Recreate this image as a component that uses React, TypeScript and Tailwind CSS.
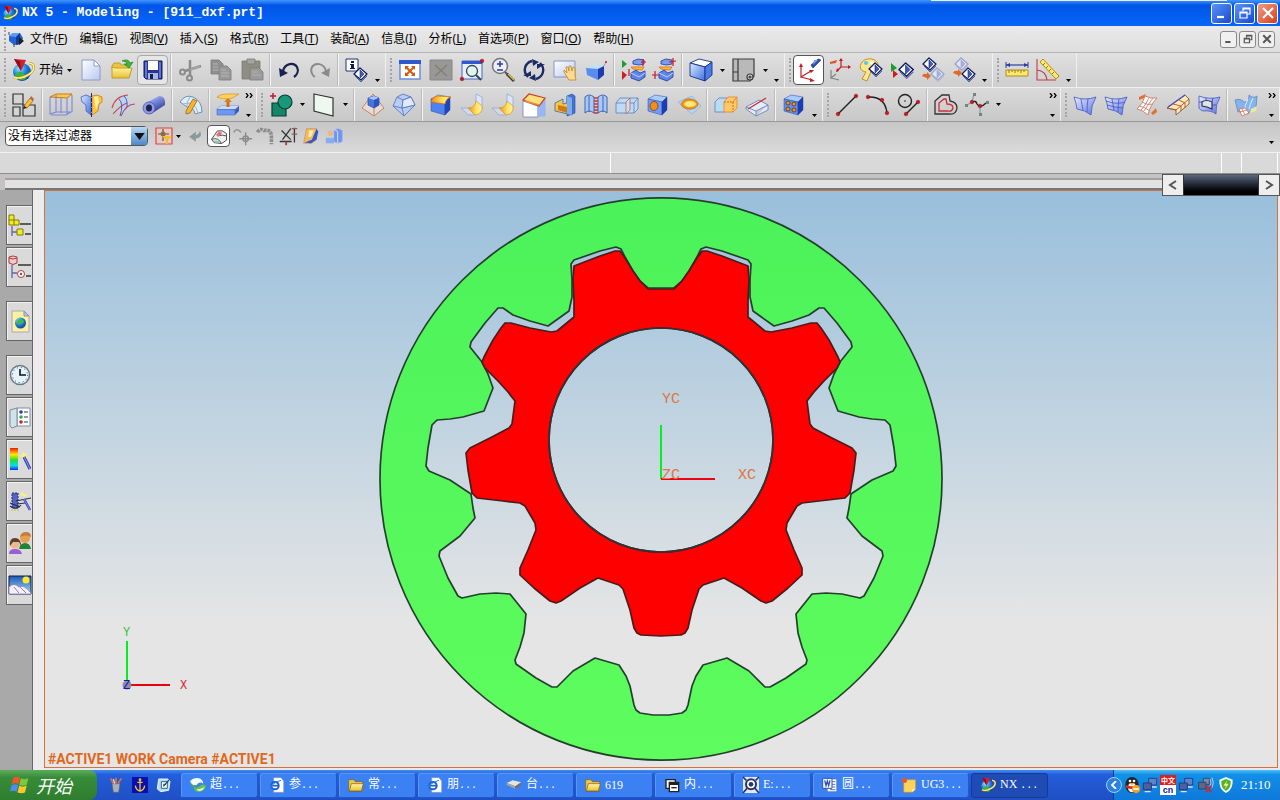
import React from "react";

type Point = [number, number];

/* ---------- shared shapes ---------- */

const Defs = () => (
  <defs>
    <linearGradient id="blue" x1="0" y1="0" x2="1" y2="1">
      <stop offset="0" stopColor="#dcebff" />
      <stop offset="1" stopColor="#3f6fe0" />
    </linearGradient>
    <linearGradient id="paleBlue" x1="0" y1="0" x2="1" y2="1">
      <stop offset="0" stopColor="#ffffff" />
      <stop offset="1" stopColor="#b9c9ee" />
    </linearGradient>
    <linearGradient id="sheet" x1="0" y1="0" x2="1" y2="1">
      <stop offset="0" stopColor="#e9edff" />
      <stop offset="1" stopColor="#5a72e2" />
    </linearGradient>
    <linearGradient id="gold" x1="0" y1="0" x2="1" y2="0">
      <stop offset="0" stopColor="#f58a1c" />
      <stop offset="0.6" stopColor="#ffe45e" />
      <stop offset="1" stopColor="#fff3a8" />
    </linearGradient>
    <linearGradient id="folder" x1="0" y1="0" x2="0" y2="1">
      <stop offset="0" stopColor="#fff7a6" />
      <stop offset="1" stopColor="#eabf34" />
    </linearGradient>
    <linearGradient id="tube" x1="0" y1="0" x2="0.5" y2="1">
      <stop offset="0" stopColor="#c9d4ff" />
      <stop offset="0.4" stopColor="#7d8ede" />
      <stop offset="1" stopColor="#2a378f" />
    </linearGradient>
    <linearGradient id="rainbow" x1="0" y1="0" x2="0" y2="1">
      <stop offset="0" stopColor="#f01800" />
      <stop offset="0.3" stopColor="#ffe800" />
      <stop offset="0.55" stopColor="#20e030" />
      <stop offset="0.8" stopColor="#10d8f0" />
      <stop offset="1" stopColor="#1028f0" />
    </linearGradient>
    <linearGradient id="sky" x1="0" y1="0" x2="0" y2="1">
      <stop offset="0" stopColor="#1c56b8" />
      <stop offset="1" stopColor="#a8e0f4" />
    </linearGradient>
    <radialGradient id="globe" cx="0.35" cy="0.3" r="0.8">
      <stop offset="0" stopColor="#9fe4ff" />
      <stop offset="0.5" stopColor="#1d7ee0" />
      <stop offset="1" stopColor="#063a94" />
    </radialGradient>
  </defs>
);

const Logo = () => (
  <>
    <circle cx="11" cy="14" r="9" fill="url(#globe)" />
    <path d="M4 17q4-6 9-1t-1 6q-6 0-8-5z" fill="#35b53a" />
    <path d="M3 1l12 1-5 11z" fill="#d81e2c" />
    <path d="M3 1l7 12-1-10z" fill="#8e0f1c" />
    <path d="M18 5c7 1 6 8-1 12-5 3-11 4-14 2" fill="none" stroke="#b58a10" strokeWidth="2.600" />
    <path d="M18 5c7 1 6 8-1 12-5 3-11 4-14 2" fill="none" stroke="#fff08a" strokeWidth="1.600" />
  </>
);

interface CubeProps {
  top: string;
  left: string;
  right: string;
}

const Cube = ({ top, left, right }: CubeProps) => (
  <g stroke="#2346a8" strokeWidth="0.5" strokeLinejoin="round">
    <path d="M2 6l7-4 12 2-5 5z" fill={top} />
    <path d="M2 6l14 3v13L2 18z" fill={left} />
    <path d="M16 9l5-5v13l-5 5z" fill={right} />
  </g>
);

const Diamond = ({ pale = false }: { pale?: boolean }) => (
  <g stroke={pale ? "#9aa3c8" : "#101c5c"} strokeWidth="1.3" strokeLinejoin="round">
    <path d="M0 6l6-6 7 6-6 6z" fill={pale ? "#e0e5f4" : "#ffffff"} />
    <path d="M6 2v8l4-4z" fill={pale ? "#a5b1dc" : "#3a5ed0"} strokeWidth="0.6" />
    <path d="M1 8l6 6 6-6" fill="none" strokeWidth="1" stroke={pale ? "#b4bddc" : "#4e66b0"} />
  </g>
);

const BlueBlocks = () => (
  <g stroke="#1c3a9c" strokeWidth="0.8" strokeLinejoin="round">
    <path d="M7 3l5-2 6 1v4l-5 1-6-1z" fill="#7c9cf0" />
    <path d="M5 15l5-3 4 3 5-2v6l-6 4-8-3z" fill="#5e84ea" />
    <path d="M5 15l8 4 6-4" fill="none" stroke="#dce6ff" />
    <path d="M5 9l13 0-2 3-9-1z" fill="#ffc22e" stroke="#e0651a" />
  </g>
);

const Dots = ({ at }: { at: Point[] }) => (
  <g fill="#d4141c" stroke="#7c0a10" strokeWidth="0.5">
    {at.map(([x, y]) => (
      <circle key={`${x}-${y}`} cx={x} cy={y} r="1.8" />
    ))}
  </g>
);

/* ---------- toolbar icons, 24 x 24 ---------- */

const icons: Record<string, React.ReactNode> = {
  logo: <Logo />,
  newFile: (
    <g stroke="#8c98cc" strokeWidth="1" fill="url(#paleBlue)">
      <path d="M3 2h12l6 6v14H3z" />
      <path d="M15 2v6h6z" fill="#fff" />
    </g>
  ),
  open: (
    <>
      <path d="M2 8l2-3h6l1 2h8v4H2z" fill="#e9c640" stroke="#c09c2c" />
      <path d="M2 20V9l3 1h17l-3 10z" fill="url(#folder)" stroke="#c09c2c" />
      <path d="M12 3c4-2 7-1 8 2l3-1-4 6-5-4h3c-1-2-2-3-5-3z" fill="#3cb83c" stroke="#157315" strokeWidth="0.6" />
    </>
  ),
  save: (
    <>
      <path d="M3 3h18v18H5l-2-2z" fill="#28368e" stroke="#141d56" />
      <path d="M7 3h10v9H7z" fill="#fff" />
      <path d="M7 15h10v6H7z" fill="#a9b6e4" />
      <path d="M9 16h3v5H9z" fill="#141d56" />
      <path d="M4 4h2v16H4zM18 4h2v16h-2z" fill="#5e74d6" />
    </>
  ),
  cut: (
    <g fill="none" stroke="#8b8b8b" strokeWidth="2">
      <circle cx="4.500" cy="14" r="2.500" />
      <circle cx="11.500" cy="20" r="2.500" />
      <path d="M7 13l16-5M12 17V2" strokeWidth="2.500" />
      <path d="M12 12l10-4" stroke="#a5a5a5" />
    </g>
  ),
  copy: (
    <g fill="#909090" stroke="#7a7a7a" strokeWidth="0.8">
      <path d="M2 2h8l4 4v10H2z" />
      <path d="M10 8h8l4 4v10H10z" fill="#999" />
      <path d="M4 6h5M4 9h6M4 12h6M12 12h5M12 15h8M12 18h8" stroke="#bdbdbd" />
    </g>
  ),
  paste: (
    <g fill="#8e8e84" stroke="#7b7b73" strokeWidth="0.8">
      <path d="M2 3h18v18H2z" />
      <path d="M7 1h8v5H7z" fill="#a5a5a0" />
      <path d="M10 10h9l4 4v8H10z" fill="#9b9b9b" />
      <path d="M12 14h6M12 17h9" stroke="#b8b8b8" />
    </g>
  ),
  undo: (
    <>
      <path d="M6 13C8 5 17 4 20 9c2 4 0 8-3 10" fill="none" stroke="#1a2050" strokeWidth="2.200" />
      <path d="M2 10l1 9 8-4z" fill="#1a2050" />
    </>
  ),
  redo: (
    <>
      <path d="M18 13C16 5 7 4 4 9c-2 4 0 8 3 10" fill="none" stroke="#8a8a8a" strokeWidth="2" />
      <path d="M22 10l-1 9-8-4z" fill="#8a8a8a" />
    </>
  ),
  info: (
    <>
      <path d="M1 1h12v12H1z" fill="#fff" stroke="#20307c" />
      <path d="M6 3h3v2H6zM5 6h4v4h1v1H5v-1h1V7H5z" fill="#10184c" />
      <g transform="translate(9 10)">
        <Diamond />
      </g>
    </>
  ),
  fit: (
    <>
      <path d="M2 3h20v18H2z" fill="#fff" stroke="#6c8ce0" strokeWidth="1.500" />
      <path d="M1 2h22v4H1z" fill="#3058cc" />
      <path d="M8 9l8 8M16 9l-8 8" stroke="#d25a14" strokeWidth="2" />
      <path d="M7 8h4l-4 4zM17 8h-4l4 4zM7 18h4l-4-4zM17 18h-4l4-4z" fill="#d25a14" />
    </>
  ),
  fitGrey: (
    <>
      <path d="M1 2h22v20H1z" fill="#989898" stroke="#878787" />
      <path d="M6 7l12 11M18 7L6 18" stroke="#857f72" strokeWidth="1.500" />
    </>
  ),
  zoomWindow: (
    <>
      <path d="M2 3h20v18H2z" fill="#e9efff" stroke="#4366c8" />
      <path d="M2 3h20v3H2z" fill="#3058cc" />
      <circle cx="12" cy="13" r="5.500" fill="#e0f4f0" stroke="#31474e" strokeWidth="1.300" />
      <path d="M16 17l5 5" stroke="#31474e" strokeWidth="2" />
      <Dots at={[[2, 21], [22, 3]]} />
    </>
  ),
  zoomInOut: (
    <>
      <circle cx="9" cy="8" r="7.500" fill="#eceefc" stroke="#77777c" strokeWidth="1.600" />
      <path d="M9 3v6M6 6h6M6 12h6" stroke="#2c3c9c" strokeWidth="1.500" />
      <path d="M14 14l3 3" stroke="#555" strokeWidth="2" />
      <path d="M16 16l7 7" stroke="#3b3b40" strokeWidth="3" />
      <path d="M17 16l6 6" stroke="#e8bc48" strokeWidth="1.300" />
    </>
  ),
  rotate: (
    <>
      <path d="M6 19C0 13 3 5 10 3M18 5c6 6 3 14-4 16" fill="none" stroke="#1c2a68" strokeWidth="2.400" />
      <path d="M10 1l7 3-6 4zM14 23l-7-3 6-4zM1 18h8v-5zM23 6h-8v5z" fill="#1c2a68" />
    </>
  ),
  pan: (
    <>
      <path d="M1 3h21v16H1z" fill="url(#paleBlue)" stroke="#8c94c0" />
      <path d="M11 12l3 3-1-6h2l1 4v-5h2l1 5 1-4 2 1v8l1 4h-7l-5-8z" fill="#ffdc8c" stroke="#b98634" strokeWidth="0.800" />
    </>
  ),
  perspective: (
    <>
      <path d="M2 10l9-3 9 1-6 3z" fill="#b9e4ff" />
      <path d="M2 10l12 1v11L3 17z" fill="#5a8cf0" />
      <path d="M14 11l6-3v9l-6 5z" fill="#1c3cae" />
      <path d="M20 8l2-4" stroke="#8c9cd0" />
      <circle cx="22" cy="4" r="1" fill="#d4141c" />
    </>
  ),
  showHide: (
    <>
      <path d="M1 2v8l5-4z" fill="#1f9c2e" />
      <path d="M1 13v9l5-5z" fill="#d31c22" />
      <g transform="translate(5 0)">
        <BlueBlocks />
      </g>
      <path d="M22 1v7M20 4h5M8 11v7" stroke="#c8142a" strokeWidth="1.200" />
    </>
  ),
  invertShown: (
    <>
      <g transform="translate(2 0)">
        <BlueBlocks />
      </g>
      <path d="M21 0v8M17 4l7-1M3 13v8M0 17h7" stroke="#c8142a" strokeWidth="1.200" />
    </>
  ),
  shaded: (
    <g stroke="#16308a" strokeWidth="0.9" strokeLinejoin="round">
      <path d="M1 5l9-4 13 3-7 5z" fill="#fff" />
      <path d="M1 5l15 4v14L1 18z" fill="url(#blue)" />
      <path d="M16 9l7-5v13l-7 6z" fill="#4c7ce8" />
    </g>
  ),
  layout: (
    <g fill="#b9b9b9" stroke="#3c3c3c" strokeWidth="1.200">
      <path d="M1 1h21v17l-4 5H1z" />
      <path d="M6 1v22M1 14h5" />
      <circle cx="18" cy="19" r="3" fill="#dedede" />
      <circle cx="18" cy="19" r="1" />
    </g>
  ),
  orient: (
    <>
      <path d="M4 7v12l10-6M4 19l11 3" fill="none" stroke="#c41a20" strokeWidth="1.200" />
      <path d="M4 5l-2 4h4zM17 12l-5 0 2 3zM18 23l-5-3v4z" fill="#c41a20" />
      <path d="M14 7l7-6 3 1-8 8z" fill="#284eb6" stroke="#14286e" strokeWidth="0.600" />
      <path d="M17 2l4 0-5 5z" fill="#7c9ce8" />
    </>
  ),
  wcs: (
    <>
      <path d="M13 1v8l-4 4M13 9h9" stroke="#c41a20" strokeWidth="1.200" fill="none" />
      <path d="M13 0l-2 3h4zM23 9l-3-2v4zM8 14l1-4 2 3z" fill="#c41a20" />
      <path d="M3 12v8l5-4M3 20l8 2" stroke="#7c8484" strokeWidth="1.200" fill="none" />
      <path d="M2 4l7-2-1 3-6 1z" fill="#e0582a" />
    </>
  ),
  palette: (
    <>
      <path d="M2 6C4 0 14-1 18 4c3 4-2 6-5 7l-5 12-5-2 4-7C2 13 0 10 2 6z" fill="#ffe58a" stroke="#b89430" />
      <circle cx="7" cy="5" r="2" fill="#52c8f0" />
      <circle cx="13" cy="5" r="1.800" fill="#fff" />
      <g transform="translate(10 5)">
        <Diamond />
      </g>
    </>
  ),
  playDiamond: (
    <>
      <path d="M1 5v9l6-4z" fill="#1f9c2e" />
      <path d="M3 12v8l5-4z" fill="#d31c22" />
      <g transform="translate(9 5) scale(1.100)">
        <Diamond />
      </g>
    </>
  ),
  toPale: (
    <>
      <g transform="translate(2 0)">
        <Diamond />
      </g>
      <g transform="translate(10 10)">
        <Diamond pale />
      </g>
      <path d="M1 18q1-3 5-2v-2l4 4-4 4v-2q-3-1-5-2z" fill="#e0682a" />
    </>
  ),
  fromPale: (
    <>
      <g transform="translate(3 0)">
        <Diamond pale />
      </g>
      <g transform="translate(10 10)">
        <Diamond />
      </g>
      <path d="M1 15q1-3 5-2v-2l4 4-4 4v-2q-3-1-5-2z" fill="#e0682a" />
    </>
  ),
  distance: (
    <>
      <path d="M1 7h22" stroke="#2a3c9c" strokeWidth="1.200" />
      <path d="M1 4v6M23 4v6" stroke="#2a3c9c" />
      <path d="M1 7l4-2v4zM23 7l-4-2v4z" fill="#2a3c9c" />
      <path d="M1 12h22v6H1z" fill="#ffe96c" stroke="#b08c1c" />
      <path d="M4 12v3M7 12v2M10 12v3M13 12v2M16 12v3M19 12v2" stroke="#7c5c10" strokeWidth="0.800" />
    </>
  ),
  angle: (
    <>
      <path d="M1 1v21h19M1 12q9 1 10 10" fill="none" stroke="#c03c44" strokeWidth="1.100" />
      <path d="M4 4l3-3 16 17-3 3z" fill="#ffe96c" stroke="#b08c1c" />
      <path d="M9 5l-2 2M12 8l-2 2M15 11l-2 2M18 14l-2 2" stroke="#7c5c10" strokeWidth="0.800" />
    </>
  ),

  sketch: (
    <>
      <path d="M1 1h10v10H1zM1 14h7v9H1zM11 12h12v11H11z" fill="#d4d4d4" stroke="#333" strokeWidth="1.200" />
      <path d="M12 13l6-8 3 3-6 7z" fill="#f6c22e" stroke="#8c5c10" strokeWidth="0.700" />
      <path d="M11 16l1-3 3 2z" fill="#222" />
      <path d="M18 5l1-2 3 3-1 2z" fill="#c05c5c" />
    </>
  ),
  extrude: (
    <>
      <path d="M1 4l6-3h16l-5 4z" fill="#ffc94a" stroke="#c8781c" />
      <path d="M1 4v17l6-2V2M7 19h15l-5 3H2M23 2v17M18 5v17M12 4v16" fill="none" stroke="#7c88d8" strokeWidth="1.100" />
    </>
  ),
  revolve: (
    <>
      <path d="M1 4l5-2 5 2v18l-5-4v-6l-4-3z" fill="url(#blue)" stroke="#4460c0" strokeWidth="0.800" />
      <path d="M12 3l5-1 5 2v5l-3 2-1 7-6 4z" fill="#ffc43c" stroke="#c8781c" strokeWidth="0.800" />
      <path d="M14 4l4-1 1 6-3 8z" fill="#fff2a0" />
      <path d="M11.500 0v24" stroke="#1c2a78" strokeWidth="1" strokeDasharray="4 1" />
    </>
  ),
  sweep: (
    <>
      <path d="M8 6q5-4 9-4l-1 8q6 0 8 2-6 0-12 11l-5-5Q12 9 8 6z" fill="#bcd2f4" />
      <path d="M1 15Q4 3 17 2M2 21q8-9 14-11M10 23q5-12 14-12" fill="none" stroke="#c84848" strokeWidth="1.100" />
      <path d="M8 6q5 5 1 17M13 3q4 4 3 11" fill="none" stroke="#4460c0" />
    </>
  ),
  tube: (
    <>
      <path d="M4 10L17 3q7 0 6 9L9 21z" fill="url(#tube)" />
      <ellipse cx="7" cy="15" rx="6" ry="6" fill="#8e9ce8" stroke="#4a58b0" strokeWidth="0.800" />
      <ellipse cx="7" cy="15" rx="3" ry="3.500" fill="#20204c" />
    </>
  ),
  sheetPencil: (
    <>
      <path d="M1 9Q6 1 14 4q9 4 9 15l-7 2Q15 14 8 14z" fill="#dceef8" stroke="#7090b4" />
      <path d="M4 11Q16 7 19 20M11 4q-3 4-3 9M18 7l-5 8" fill="none" stroke="#9cb4cc" />
      <path d="M7 18l7-12 4 2-7 12-4 1z" fill="#f6b42e" stroke="#8c5c10" strokeWidth="0.700" />
    </>
  ),
  hole: (
    <>
      <path d="M1 16l4-3h18l-4 4zM1 16h18v6H1z" fill="#6c98f4" stroke="#4a6cc8" strokeWidth="0.600" />
      <path d="M1 16l4-3h18l-4 3z" fill="#c8dcff" />
      <path d="M19 17l4-4v5l-4 4z" fill="#3a5cc4" />
      <path d="M1 4q3-3 10-3h12l-5 3q-2 2-8 2-5 0-9-2z" fill="#ffd35a" stroke="#d0902c" strokeWidth="0.700" />
      <path d="M12 6v8" stroke="#c8701c" strokeWidth="3" />
      <path d="M8 9l4-4 4 4z" fill="#d8801c" />
    </>
  ),
  unite: (
    <>
      <path d="M3 10h14v13H3z" fill="#14866c" stroke="#0a3c30" strokeWidth="1.200" />
      <circle cx="16" cy="9" r="7" fill="#189878" stroke="#0a3c30" strokeWidth="1.200" />
      <path d="M1 3h6M4 0v6" stroke="#c41a20" strokeWidth="1.500" />
    </>
  ),
  plane: <path d="M2 1l19 4v18L2 18z" fill="#eef8ee" stroke="#333" strokeWidth="1.200" />,
  pyramid: (
    <>
      <path d="M12 1L1 15l12 8 10-8z" fill="#e4dcd8" stroke="#c88458" />
      <path d="M13 8v15" stroke="#c88458" />
      <path d="M7 5l6-2 5 2v7l-5 3-6-3z" fill="#4674e0" stroke="#2846a0" strokeWidth="0.700" />
      <path d="M7 5l6-2 5 2-5 2z" fill="#a8c8ff" />
      <path d="M13 7l5-2v7l-5 3z" fill="#2c54c0" />
    </>
  ),
  facet: (
    <g fill="#b8cdf4" stroke="#5a78c0" strokeWidth="0.9">
      <path d="M5 4l6-3 8 3 4 8-11 11L1 13z" />
      <path d="M5 4l6 3 8-3M11 7l-1 8-9-2M10 15l13-3M10 15l2 8" fill="none" />
      <path d="M11 7l8-3 4 8-13 3z" fill="#e0eaff" />
    </g>
  ),
  edgeBlend: (
    <>
      <Cube top="#ffd45a" left="#4f82ee" right="#1f46ba" />
      <path d="M2 9q1-5 6-6l14 1q-5 1-6 7z" fill="url(#gold)" stroke="#d06c14" strokeWidth="0.700" />
    </>
  ),
  faceBlend: (
    <>
      <path d="M16 1l6 3v12l-6-4z" fill="#dce6fa" stroke="#8ca0d0" strokeWidth="0.700" />
      <path d="M1 15h8l6 7H8z" fill="#d0d8ec" stroke="#8ca0d0" strokeWidth="0.700" />
      <path d="M16 8q-1 7-8 7l7 7q8-1 7-9z" fill="url(#gold)" stroke="#d8902c" strokeWidth="0.700" />
    </>
  ),
  chamfer: (
    <>
      <path d="M1 8l15 5v11H1z" fill="#fff" stroke="#6c84d8" strokeWidth="0.800" />
      <path d="M16 13l7-7v17h-7z" fill="#98b8f4" stroke="#8cb0f0" strokeWidth="0.800" />
      <path d="M1 7l6-6 16 4-6 8z" fill="#ffe07c" stroke="#c83c24" strokeWidth="1.200" />
      <path d="M3 8l14 4" stroke="#f08c2c" strokeWidth="1.500" />
    </>
  ),
  shell: (
    <>
      <path d="M14 3l5-2 3 2v17l-8 3z" fill="#4474dc" stroke="#2346a8" strokeWidth="0.600" />
      <path d="M2 10l8-4v5l4-1V3l5 2v17L2 18z" fill="#ffc23c" stroke="#2a6cb4" strokeWidth="0.800" />
      <path d="M5 12l9 2v6l-9-3z" fill="#c87c1c" />
      <path d="M14 3l5 2v17l-5-1z" fill="#7cacf0" />
    </>
  ),
  thread: (
    <>
      <path d="M1 4q4-4 9 0v16q-5-4-9 0zM14 4q5-4 9 0v16q-4-4-9 0z" fill="#a9c8f4" stroke="#3c64b4" />
      <path d="M5 3v16M19 3v16" stroke="#3c64b4" />
      <path d="M10 5h4M10 8h4M10 11h4M10 14h4M10 17h4M10 20h4" stroke="#c83434" strokeWidth="1.300" />
    </>
  ),
  trimBody: (
    <>
      <path d="M1 10l4-5h18v11l-4 4H1z" fill="#c0daf4" stroke="#5c80bc" strokeWidth="0.800" />
      <path d="M1 10h18l4-5M19 10v10" fill="none" stroke="#5c80bc" strokeWidth="0.800" />
      <path d="M11 21V9l4-4v12z" fill="#dcdce0" stroke="#a46c6c" strokeWidth="0.800" />
    </>
  ),
  pocket: (
    <>
      <Cube top="#a8ccff" left="#6f9cf6" right="#1f3cae" />
      <ellipse cx="8" cy="13" rx="4" ry="4.500" fill="#f0901c" stroke="#7c3c10" strokeWidth="0.800" />
    </>
  ),
  emboss: (
    <>
      <path d="M1 9l14-6 9 10-9 8z" fill="#b4d4f8" stroke="#8cb0dc" strokeWidth="0.700" />
      <path d="M4 11q3-6 10-5 8 2 7 6-3 5-10 4-6-1-7-5z" fill="#f4941c" stroke="#c06c14" strokeWidth="0.700" />
      <ellipse cx="13" cy="11" rx="6" ry="3" fill="#ffe878" />
    </>
  ),
  patch: (
    <>
      <path d="M1 9l4-4h9v5l-3 9H1z" fill="#b9dcf2" stroke="#5c80bc" strokeWidth="0.800" />
      <path d="M10 9l4-5h9v11l-4 4h-9z" fill="#ffc868" stroke="#e0882c" strokeWidth="0.800" />
      <path d="M10 9h9l4-5M19 9v10" fill="none" stroke="#d4681c" strokeDasharray="2 1" />
    </>
  ),
  divideFace: (
    <>
      <path d="M1 14l13-7 9 5-12 6zM1 14v2l10 7v-5M11 23l12-6v-5" fill="#e4ecfa" stroke="#5c78b4" strokeWidth="0.800" />
      <path d="M3 16L21 5" stroke="#c8302c" strokeWidth="1.300" />
    </>
  ),
  pattern: (
    <>
      <Cube top="#a8ccff" left="#5f8ef2" right="#1f3cae" />
      <g fill="#f4921c" stroke="#5c3410" strokeWidth="0.800">
        <circle cx="6" cy="10" r="2" />
        <circle cx="12" cy="11" r="2" />
        <circle cx="6" cy="16" r="2" />
        <circle cx="12" cy="17" r="2" />
      </g>
    </>
  ),
  line: (
    <>
      <path d="M3 21L21 3" stroke="#222" strokeWidth="1.400" />
      <Dots at={[[3, 21], [21, 3]]} />
    </>
  ),
  arc: (
    <>
      <path d="M2 4q17-1 19 16" fill="none" stroke="#222" strokeWidth="1.400" />
      <Dots at={[[2, 4], [16, 7], [21, 20]]} />
    </>
  ),
  circleLine: (
    <>
      <circle cx="8" cy="8" r="6.500" fill="none" stroke="#222" strokeWidth="1.400" />
      <circle cx="8" cy="8" r="0.800" fill="#222" />
      <path d="M9 21L21 9" stroke="#222" strokeWidth="1.400" />
      <Dots at={[[9, 21], [21, 9]]} />
    </>
  ),
  offset: (
    <g fill="none" strokeWidth="1.300">
      <path d="M1 21V8l7-6h7l1 6q7 1 7 7-1 7-8 6z" stroke="#333" />
      <path d="M5 18v-8l5-4h2l1 5q6 0 6 4-1 4-5 3z" stroke="#c8303c" />
    </g>
  ),
  spline: (
    <>
      <path d="M7 9q4-2 5 2 3 5 9-1" fill="none" stroke="#222" strokeWidth="1.400" />
      <path d="M7 9l2-8M7 9l-5 3M15 13v9" stroke="#8c9c9c" strokeWidth="1.200" />
      <g fill="#748484">
        <path d="M8 0h3v3H8zM0 11h3v3H0zM14 20h3v3h-3zM21 8h3v3h-3z" />
      </g>
      <Dots at={[[7, 9], [15, 13]]} />
    </>
  ),
  ruled: (
    <g stroke="#4454c0" strokeWidth="0.800">
      <path d="M1 4q11 4 22 0-5 8-5 18-6-5-14-6-1-7-3-12z" fill="url(#sheet)" />
      <path d="M8 6q1 6 2 11M15 6q-1 6-1 13" fill="none" />
    </g>
  ),
  mesh: (
    <g stroke="#4454c0" strokeWidth="0.800">
      <path d="M1 4q11 4 22 0-5 8-5 18-6-5-14-6-1-7-3-12z" fill="url(#sheet)" />
      <path d="M8 6q1 6 2 11M15 6q-1 6-1 13M2 8q11 4 19 1M3 12q10 3 16 3" fill="none" />
    </g>
  ),
  swept: (
    <>
      <path d="M10 3q6 3 12 2-7 6-9 17-5-5-11-6Q8 11 10 3z" fill="#fff" />
      <path d="M10 3q6 3 12 2M7 9q6 4 11 2M4 13q6 1 11 5M2 16q6 1 11 6M10 3Q8 11 2 16M14 5q-4 8-8 12M18 5q-5 7-9 13M22 5q-7 7-9 17" fill="none" stroke="#d07c6c" strokeWidth="0.900" />
      <path d="M4 4l7-3-2 4-5 2zM16 20l5-5 1 4-4 3z" fill="#e0702c" />
    </>
  ),
  section: (
    <>
      <path d="M1 15L19 2l4 4v5L10 22v-5z" fill="#ffe9b0" stroke="#7c5c3c" strokeWidth="0.900" />
      <path d="M1 15l9 2L23 6M7 11l8 2v5M13 7l6 3v5" fill="none" stroke="#b04c3c" strokeWidth="0.900" />
      <path d="M2 14L19 2" stroke="#4454c0" strokeWidth="1.300" />
    </>
  ),
  nSided: (
    <>
      <path d="M2 3q10 4 21 1-5 8-4 17-5-4-13-3Q3 17 2 15z" fill="url(#sheet)" stroke="#4454c0" strokeWidth="0.800" />
      <path d="M5 13V9q4-3 10 0v7l-5-2z" fill="#e0e4e8" stroke="#28344c" strokeWidth="1.200" />
      <path d="M9 5v3M16 5l-1 4M2 9h3M15 12h4" stroke="#4454c0" />
    </>
  ),
  studio: (
    <>
      <path d="M1 7q6-2 9 2 5 1 5-7 4 4 8 1l-1 12q-5 1-8 6-4-4-10-2z" fill="#84b4f0" stroke="#4c74b0" strokeWidth="0.600" />
      <path d="M14 6q-4 7-3 12M19 5q-3 7-4 11" fill="none" stroke="#dceaff" />
      <path d="M5 16l6-1 4 5-7 3z" fill="#fff" stroke="#d45c3c" strokeWidth="0.700" />
      <path d="M8 16l3 6M6 19l7-2" stroke="#d45c3c" strokeWidth="0.700" />
      <path d="M17 16l6-3-1 5-6 2z" fill="#ece8a4" />
    </>
  ),

  /* selection bar */
  snap: (
    <>
      <path d="M4 4h16v16H4z" fill="#e4ccc4" stroke="#d4484c" strokeWidth="1.200" />
      <path d="M11 5v12M6 10h11" stroke="#6c4a34" strokeWidth="1.200" />
      <circle cx="11" cy="10" r="2.500" fill="#8c6c44" />
      <path d="M10 12h10l-4 4v4h-2v-4z" fill="#f4bc28" />
    </>
  ),
  back: <path d="M18 6q4 8-5 9v4l-8-6 8-6v4q4-1 5-5z" fill="#8a9a9a" />,
  eraser: (
    <g stroke="#444" strokeWidth="1.100" strokeLinejoin="round">
      <path d="M3 16l7-10q6-2 11 3l0 8-6 4-9-1z" fill="#f0f0f0" />
      <path d="M3 16q8-3 12 5M10 12q7-2 11 0" fill="none" />
      <path d="M8 11l4-4 4 1-3 4z" fill="#e06c78" stroke="none" />
      <path d="M5 17l7 1 1 2H7z" fill="#8cc8b8" stroke="none" />
    </g>
  ),
  point: (
    <g fill="none" stroke="#8c8c8c" strokeWidth="1.500">
      <path d="M3 8q3-6 8 0M16 8v14M9 15h14" />
      <circle cx="16" cy="15" r="3" />
    </g>
  ),
  chain: (
    <path d="M4 8q2-5 7-2 8-2 8 7v8" fill="none" stroke="#8c8c8c" strokeWidth="4" strokeDasharray="3 1" />
  ),
  filterLine: (
    <g fill="none" stroke="#333" strokeWidth="1.400">
      <path d="M5 6l10 10M15 4L6 16M19 3v16M3 18h13" />
      <path d="M16 4h6M16 10h6" stroke="#8c5c54" />
      <path d="M10 18v4" stroke="#b03c34" strokeWidth="2" />
    </g>
  ),
  faceSel: (
    <>
      <path d="M7 4h11v11l-5 5H4z" fill="#f4b860" stroke="#c88c5c" strokeWidth="0.700" />
      <path d="M18 4l2 3-2 9-6 4-7-1 8-3z" fill="#3458c8" />
      <path d="M10 6h5l-3 7H9z" fill="#fff0a8" />
    </>
  ),
  bodySel: (
    <>
      <path d="M12 5l5-1 4 2v12l-5 2-4-2z" fill="#6f94f0" stroke="#9cb0ec" strokeWidth="0.700" />
      <path d="M12 5l4 2v13" fill="none" stroke="#dce6ff" />
      <circle cx="8" cy="9" r="3" fill="#e8b888" />
      <path d="M3 14h9v6H3z" fill="#8cacf0" />
    </>
  ),

  /* resource bar */
  assemblyNav: (
    <>
      <path d="M1 2h5v5h5v5H1z" fill="#f4ec1c" stroke="#7c7c10" />
      <path d="M1 7h5v5" fill="none" stroke="#7c7c10" />
      <path d="M12 11h11M17 21h6" stroke="#333" strokeWidth="1.500" />
      <path d="M4 13v10M4 19h5" stroke="#6464a8" strokeWidth="1.300" />
      <path d="M9 16h6v6H9z" fill="#f4ec1c" stroke="#7c7c10" />
    </>
  ),
  partNav: (
    <>
      <path d="M1 2q4-2 8 0v6q-4 3-8 0z" fill="#f0c8c8" stroke="#a83c3c" />
      <path d="M1 3q4 2 8 0" fill="none" stroke="#a83c3c" />
      <path d="M10 10h13M18 21h5" stroke="#333" strokeWidth="1.500" />
      <path d="M4 10v13M4 18h5" stroke="#6464a8" strokeWidth="1.300" />
      <circle cx="13" cy="19" r="3.500" fill="#fff" stroke="#a83c3c" />
      <circle cx="13" cy="19" r="1.200" fill="#a83c3c" />
    </>
  ),
  webPage: (
    <>
      <path d="M4 2h12l5 5v16H4z" fill="#fff0a0" stroke="#a8a8b8" />
      <path d="M16 2v5h5z" fill="#b4c8f0" stroke="#8c8cb0" />
      <circle cx="12.500" cy="14" r="5.500" fill="url(#globe)" />
      <path d="M9 12q3-4 6-1t-3 4q-4 1-3-3z" fill="#44b44c" />
    </>
  ),
  clock: (
    <>
      <circle cx="12" cy="12" r="9.500" fill="#e4f4fc" stroke="#6c7c84" strokeWidth="1.500" />
      <circle cx="12" cy="12" r="7.500" fill="none" stroke="#34444c" strokeDasharray="1 3" />
      <path d="M12 6v6h6" fill="none" stroke="#111" strokeWidth="1.600" />
    </>
  ),
  roles: (
    <>
      <path d="M9 3h13v18H9z" fill="#fff" stroke="#7c8ca0" />
      <path d="M2 5l7-2v18l-5 2-2-2z" fill="#d0e4e8" stroke="#7c8ca0" />
      <circle cx="13" cy="7" r="1.800" fill="#2c3cb0" />
      <circle cx="13" cy="12" r="1.800" fill="#2cb04c" />
      <circle cx="13" cy="17" r="1.800" fill="#d01c3c" />
      <path d="M16 7h4M16 12h4M16 17h4" stroke="#333" />
    </>
  ),
  spectrum: (
    <>
      <path d="M2 1h8v22H2z" fill="url(#rainbow)" />
      <path d="M15 4l2 3 3-1-2 3 3 3-4-1-2 3-1-4-3-1 3-2z" fill="#f4f08c" />
      <path d="M16 10l6 12" stroke="#3840b8" strokeWidth="3" />
      <path d="M16 10l6 12" stroke="#a8b0f4" strokeWidth="0.800" />
    </>
  ),
  process: (
    <>
      <path d="M4 4h6v15H4z" fill="#5864c0" stroke="#202c70" strokeDasharray="2 1" />
      <path d="M2 17q6 5 11-1M8 12l15-3M9 15l8-1M2 14l10 4" stroke="#28304c" strokeWidth="1.100" fill="none" />
      <path d="M3 21h9" stroke="#c8c040" strokeDasharray="2 1" />
      <path d="M14 2l2 3 4 0-3 3-5-2z" fill="#f4f08c" />
      <path d="M16 10l6 11" stroke="#3840b8" strokeWidth="2.500" />
      <path d="M16 10l6 11" stroke="#a8b0f4" strokeWidth="0.700" />
    </>
  ),
  people: (
    <>
      <circle cx="17" cy="7" r="5" fill="#e8a04c" />
      <path d="M12 6q1-5 6-5t5 5q-5-3-11 0z" fill="#c87c3c" />
      <path d="M11 18q1-6 6-6t6 6z" fill="#1f8434" />
      <circle cx="7" cy="13" r="4.500" fill="#f0b888" />
      <path d="M2 15q-1-8 5-8t6 8l-2-4H5z" fill="#5c4034" />
      <path d="M1 23q0-5 6-5t7 5z" fill="#9c5cd8" />
    </>
  ),
  scene: (
    <>
      <path d="M1 3h22v18H1z" fill="url(#sky)" stroke="#102048" />
      <circle cx="18" cy="7" r="3.500" fill="#ffe830" />
      <path d="M1 21v-7q5-5 10 0 5-3 12 6v1z" fill="#f4f0fc" stroke="#8c7cac" strokeWidth="0.800" />
      <path d="M6 14l5 6M12 14l6 6" stroke="#8c7cac" />
    </>
  ),

  /* taskbar */
  flag: (
    <>
      <path d="M4 3q4-2 8 0l-2 8q-4-2-8 0z" fill="#f0582c" />
      <path d="M13 4q4 2 9 0l-2 8q-4 2-9 0z" fill="#7cc83c" />
      <path d="M2 12q4-2 8 0l-2 8q-4-2-8 0z" fill="#4c8cf4" />
      <path d="M11 13q4 2 9 0l-2 8q-4 2-9 0z" fill="#fcc82c" />
    </>
  ),
  tools: (
    <>
      <path d="M6 10h12l-2 13H8z" fill="#a8b0b8" stroke="#5c646c" />
      <path d="M8 10L4 2M12 10V1M15 10l5-8" stroke="#d8743c" strokeWidth="2.500" />
      <path d="M10 10L8 3" stroke="#dcdce8" strokeWidth="2" />
    </>
  ),
  anchor: (
    <>
      <path d="M0 0h24v24H0z" fill="#0810b0" />
      <path d="M12 4v17M5 13q1 7 7 8 6-1 7-8M8 8h8" fill="none" stroke="#f4c02c" strokeWidth="2" />
      <circle cx="12" cy="4" r="2" fill="#f4c02c" />
    </>
  ),
  desktop: (
    <>
      <path d="M4 3h14l3 3-2 14-12 2-5-4z" fill="#b8dcf4" stroke="#e8f4ff" strokeWidth="1.500" />
      <path d="M8 7h9v10H8z" fill="#fff" stroke="#306090" strokeWidth="1.500" />
      <path d="M11 14l9-10M11 11h4" stroke="#1c446c" strokeWidth="2" />
    </>
  ),
  greenBird: (
    <>
      <path d="M0 6q6-6 13-4 6 1 7 8-6-4-10 2-7 2-10-6z" fill="#f4fff0" />
      <path d="M0 6q1 8 10 6l-3 3Q1 15 0 6z" fill="#4cb430" />
      <path d="M24 14q-3 9-12 8-6 0-6-7 5 3 9-2 7-4 9 1z" fill="#60c838" />
      <path d="M10 18q6 1 12-3-3 6-8 6-3 0-4-3z" fill="#e8ffd8" />
    </>
  ),
  ie: (
    <>
      <path d="M7 1h11l4 5v17H7z" fill="#fff" stroke="#8c98b0" />
      <circle cx="9" cy="13" r="5.500" fill="#fff" stroke="#1c60d0" strokeWidth="3" />
      <path d="M4 13h11" stroke="#1c60d0" strokeWidth="2.500" />
      <path d="M1 21Q2 9 18 5" fill="none" stroke="#2c80e8" strokeWidth="1.500" />
    </>
  ),
  folder: (
    <>
      <path d="M1 4h8l2 3h11v14H1z" fill="#ecc850" stroke="#7c5c14" />
      <path d="M2 21L5 10h18l-3 11z" fill="url(#folder)" stroke="#7c5c14" />
    </>
  ),
  drive: (
    <>
      <path d="M1 9l9-4 13 3-9 6z" fill="#e4e4e0" />
      <path d="M1 9l13 5v4L1 12z" fill="#a4a49c" />
      <path d="M14 14l9-6v4l-9 6z" fill="#707068" />
    </>
  ),
  dataWindow: (
    <>
      <path d="M3 4h14v13H3z" fill="#fff" stroke="#222" strokeWidth="2" />
      <path d="M8 8h14v14H8z" fill="#fff" stroke="#222" strokeWidth="2" />
      <path d="M8 8h14v4H8z" fill="#222" />
      <path d="M11 16h8" stroke="#222" strokeWidth="2" />
    </>
  ),
  lens: (
    <>
      <path d="M0 0h24v24H0z" fill="#e4e8f4" />
      <circle cx="12" cy="11" r="7.500" fill="#fff" stroke="#28346c" strokeWidth="3" />
      <circle cx="12" cy="11" r="3.500" fill="#28346c" />
      <path d="M17 16l7 8M0 24l6-7M0 0l5 5M24 0l-5 5" stroke="#28346c" strokeWidth="2.500" />
    </>
  ),
  word: (
    <>
      <path d="M8 3h14v19H8z" fill="#fff" stroke="#5c74ac" />
      <path d="M12 7h8M15 11h5M15 15h5M12 19h8" stroke="#5c74ac" strokeWidth="1.500" />
      <path d="M1 2h14v15H1z" fill="#f4f8ff" stroke="#3054b4" strokeWidth="1.500" />
      <path d="M4 5l2 8 2-7 2 7 2-8" fill="none" stroke="#2448b0" strokeWidth="1.800" />
    </>
  ),
  note: (
    <>
      <path d="M4 4h18v14l-5 5H4z" fill="#fcd45c" stroke="#c08c28" />
      <path d="M17 23v-5h5z" fill="#fff0b4" />
      <circle cx="5" cy="5" r="4" fill="#e0583c" />
    </>
  ),
  penguin: (
    <>
      <ellipse cx="12" cy="12" rx="10" ry="12" fill="#20242c" />
      <ellipse cx="12" cy="16" rx="6" ry="7" fill="#fff" />
      <circle cx="9" cy="6" r="2" fill="#fff" />
      <circle cx="15" cy="6" r="2" fill="#fff" />
      <path d="M7 9h10l-5 3z" fill="#f4a81c" />
      <path d="M3 12q9 4 18 0v4q-9 4-18 0z" fill="#e0281c" />
      <circle cx="18" cy="18" r="6" fill="#f4a020" />
      <path d="M14 18h8" stroke="#fff" strokeWidth="2.500" />
    </>
  ),
  network: (
    <g stroke="#203070" strokeWidth="1.200">
      <path d="M10 2h12v10H10z" fill="#5c84c8" />
      <path d="M2 9h12v10H2z" fill="#4c60a0" />
      <path d="M4 22h9M15 15h7" stroke="#dce0ec" strokeWidth="2" />
    </g>
  ),
  networkOff: (
    <g stroke="#303850" strokeWidth="1.200">
      <path d="M8 2h9v9H8z" fill="#7c8cac" />
      <path d="M1 8h11v10H1z" fill="#5c6888" />
      <path d="M18 3q3 5 0 11M21 1q4 8 0 15" fill="none" stroke="#dce0ec" />
      <path d="M12 13l8 10M20 13l-8 10" stroke="#e02020" strokeWidth="2.500" />
    </g>
  ),
  shield: (
    <>
      <path d="M12 0l10 4q1 14-10 20Q1 18 2 4z" fill="#f4fff0" />
      <path d="M12 3l7 3q1 10-7 15Q4 16 5 6z" fill="#50b030" />
      <path d="M14 5l-6 8h4l-2 6 6-9h-4z" fill="#fff27c" />
    </>
  ),
};

interface IconProps {
  name: string;
  className?: string;
}

const Icon: React.FC<IconProps> = ({ name, className = "h-6 w-6" }) => (
  <svg viewBox="0 0 24 24" className={`${className} shrink-0 overflow-visible`} aria-hidden="true">
    {icons[name]}
  </svg>
);

/* ---------- toolbars ---------- */

const Grip = () => (
  <span className="ml-1 mr-px h-6 w-[3px] shrink-0 border-l-2 border-dotted border-[#a4a4a4]" />
);

const Separator = () => (
  <span className="mx-[2px] h-8 w-[2px] shrink-0 border-l border-r border-l-[#bcbcbc] border-r-[#f4f4f4]" />
);

const Caret = ({ className = "h-7 w-3" }: { className?: string }) => (
  <button aria-label="More" className={`flex shrink-0 items-center justify-center ${className}`}>
    <svg viewBox="0 0 5 3" className="h-[3px] w-[5px]">
      <path d="M0 0h5L2.500 3z" fill="#000" />
    </svg>
  </button>
);

const Overflow = ({ chevron = false }: { chevron?: boolean }) => (
  <button aria-label="Toolbar options" className="flex h-8 w-[11px] shrink-0 flex-col items-center justify-between pb-1 pt-1">
    <svg viewBox="0 0 8 5" className="h-[5px] w-2">
      {chevron && <path d="M1 0l2 2.500L1 5M5 0l2 2.500L5 5" fill="none" stroke="#000" strokeWidth="1.300" />}
    </svg>
    <svg viewBox="0 0 5 3" className="h-[3px] w-[5px]">
      <path d="M0 0h5L2.500 3z" fill="#000" />
    </svg>
  </button>
);

/* "|" is a separator, "v" a drop-down arrow, a leading "*" a pressed button */
const Tools = ({ items }: { items: string }) => (
  <>
    {items.split(" ").map((item, i) => {
      if (item === "|") return <Separator key={i} />;
      if (item === "v") return <Caret key={i} />;
      const name = item.replace("*", "");
      return (
        <button
          key={i}
          aria-label={name}
          className={`flex h-[30px] w-[31px] shrink-0 items-center justify-center rounded-sm ${
            item.startsWith("*")
              ? name === "save"
                ? "border border-[#a8a8a8] bg-[#e6e6e6]"
                : "border border-[#555] bg-white"
              : ""
          }`}
        >
          <Icon name={name} />
        </button>
      );
    })}
  </>
);

const Group = ({ children, className = "" }: { children: React.ReactNode; className?: string }) => (
  <div className={`flex items-center border-r border-r-[#f0f0f0] pr-[2px] ${className}`}>
    <Grip />
    {children}
  </div>
);

/* ---------- title and menu ---------- */

const menus: [string, string][] = [
  ["文件", "F"],
  ["编辑", "E"],
  ["视图", "V"],
  ["插入", "S"],
  ["格式", "R"],
  ["工具", "T"],
  ["装配", "A"],
  ["信息", "I"],
  ["分析", "L"],
  ["首选项", "P"],
  ["窗口", "O"],
  ["帮助", "H"],
];

const windowGlyphs: [string, string][] = [
  ["Minimize", "M3 12h7"],
  ["Restore", "M6 6V3h7v6h-3M3 7h7v6H3zM3 8h7M6 4h7"],
  ["Close", "M3 3l10 10M13 3L3 13"],
];

const TitleBar = () => (
  <header className="relative flex h-[26px] items-center bg-linear-to-b from-[#3f96ff] via-[#0055e5] via-20% to-[#0566fb] pl-[2px] pr-[2px]">
    <span className="absolute right-[53px] top-0 h-px w-[296px] bg-[#e6ecf4]" />
    <Icon name="logo" className="h-4 w-4" />
    <h1 className="ml-1 flex-1 whitespace-nowrap font-['Liberation_Mono','Noto_Sans_CJK_SC',monospace] text-[13px] font-bold leading-5 text-white">
      NX 5 - Modeling - [911_dxf.prt]
    </h1>
    <div className="flex gap-[2px]">
      {windowGlyphs.map(([label, d]) => (
        <button
          key={label}
          aria-label={label}
          className={`flex h-[21px] w-[21px] items-center justify-center rounded-[3px] border border-white ${
            label === "Close"
              ? "bg-linear-to-br from-[#f09a80] to-[#d43a10]"
              : "bg-linear-to-br from-[#5c92f4] to-[#1848d0]"
          }`}
        >
          <svg viewBox="0 0 16 16" className="h-4 w-4">
            <path d={d} fill="none" stroke="#fff" strokeWidth={label === "Restore" ? 1.2 : 2.2} />
          </svg>
        </button>
      ))}
    </div>
  </header>
);

const MenuBar = () => (
  <nav className="flex h-[26px] items-center bg-linear-to-b from-[#eaeaea] to-[#dedede] pr-[5px]">
    <Grip />
    <svg viewBox="0 0 16 16" className="h-4 w-4" aria-hidden="true">
      <path d="M1 5l4-3h7l3 5-2 6-7 1-5-4z" fill="#2464d4" />
      <path d="M1 5l4-3h7L8 6z" fill="#5c9cf4" />
      <path d="M8 6l4-4v11l-4 1z" fill="#123c94" />
      <path d="M11 6l5 4-5 4z" fill="#222" />
      <path d="M1 1v3M6 13v3" stroke="#345" />
    </svg>
    <ul className="ml-[6px] flex flex-1 gap-3 text-xs text-black">
      {menus.map(([label, key]) => (
        <li key={key}>
          <button className="whitespace-nowrap">
            {label}(<span className="underline">{key}</span>)
          </button>
        </li>
      ))}
    </ul>
    <div className="flex gap-[2px]">
      {windowGlyphs.map(([label, d]) => (
        <button
          key={label}
          aria-label={`${label} document`}
          className="flex h-[17px] w-[17px] items-center justify-center rounded-[3px] border border-[#8a8a8a] bg-[#f0f0f0]"
        >
          <svg viewBox="0 0 16 16" className="h-3 w-3">
            <path d={d} fill="none" stroke="#555" strokeWidth={label === "Restore" ? 1.6 : 2.6} />
          </svg>
        </button>
      ))}
    </div>
  </nav>
);

const SelectionBar = () => (
  <div className="flex h-[31px] items-center border-t border-[#9a9a9a] bg-linear-to-b from-[#c6c6c6] to-[#dadada] pb-[2px] pl-[5px] pr-[3px]">
    <div className="relative flex">
      <select
        aria-label="选择过滤器"
        className="h-5 w-[143px] appearance-none rounded-sm border border-[#555] bg-white pl-[2px] text-xs leading-4 text-black"
      >
        <option>没有选择过滤器</option>
      </select>
      <span className="pointer-events-none absolute right-px top-px flex h-[18px] w-4 items-center justify-center bg-linear-to-b from-[#b8d8f4] to-[#4c88c8]">
        <svg viewBox="0 0 12 8" className="h-[7px] w-[11px]">
          <path d="M0 0h12L6 8z" fill="#111" />
        </svg>
      </span>
    </div>
    <div className="ml-[6px] flex items-center">
      <button aria-label="Snap" className="flex w-5 justify-center">
        <Icon name="snap" />
      </button>
      <Caret className="h-6 w-2" />
      <button aria-label="Back" className="flex w-[25px] justify-center">
        <Icon name="back" className="h-5 w-5" />
      </button>
      <button aria-label="Erase" className="flex h-[22px] w-[23px] items-center justify-center rounded-sm border border-[#555] bg-white">
        <Icon name="eraser" className="h-5 w-5" />
      </button>
      {["point", "chain", "filterLine", "faceSel", "bodySel"].map((name) => (
        <button key={name} aria-label={name} className="flex w-[23px] justify-center">
          <Icon name={name} className="h-[22px] w-[22px]" />
        </button>
      ))}
    </div>
    <div className="ml-auto self-end">
      <Caret className="h-4 w-[11px]" />
    </div>
  </div>
);

/* ---------- graphics window ---------- */

const AXIS_X = 661;

/* left half of each profile, from the top centre down to the bottom centre */
const ringProfile: Point[] = [
  [661, 288], [648, 288], [640, 281], [633, 271], [625, 257], [621, 249], [616, 247], [600, 251],
  [574, 260], [571, 264], [572, 280], [572, 297], [569, 311], [548, 326], [530, 321], [513, 315],
  [503, 308], [498, 308], [485, 323], [471, 342], [470, 347], [482, 362], [488, 374], [493, 388],
  [484, 411], [463, 417], [450, 419], [437, 420], [432, 425], [428, 448], [426, 466], [429, 471],
  [450, 480], [471, 494], [473, 508], [475, 518], [460, 536], [440, 551], [439, 556], [448, 578],
  [458, 596], [462, 598], [480, 594], [496, 593], [510, 594], [526, 614], [524, 633], [520, 647],
  [515, 660], [516, 664], [536, 678], [552, 687], [557, 687], [573, 671], [595, 658], [619, 665],
  [626, 676], [630, 686], [634, 705], [636, 710], [640, 713], [653, 715], [661, 715],
];

const rotorProfile: Point[] = [
  [661, 289], [648, 289], [640, 281], [633, 271], [625, 258], [620, 251], [615, 251], [600, 256],
  [574, 266], [573, 280], [574, 300], [574, 317], [557, 331], [551, 332], [530, 328], [511, 323],
  [505, 323], [501, 328], [493, 340], [484, 357], [482, 362], [485, 368], [498, 381], [508, 392],
  [515, 401], [512, 424], [509, 428], [490, 438], [470, 448], [466, 453], [468, 470], [472, 493],
  [477, 498], [503, 501], [520, 503], [525, 506], [535, 523], [536, 530], [528, 550], [520, 568],
  [520, 575], [534, 588], [550, 601], [556, 603], [561, 601], [580, 588], [598, 578], [619, 585],
  [623, 589], [630, 610], [634, 628], [637, 633], [641, 635], [661, 636],
];

const mirror = (half: Point[]) => {
  const right = half.map(([x, y]): Point => [2 * AXIS_X - x, y]).reverse();
  return `M${[...half, ...right].map((p) => p.join(" ")).join("L")}Z`;
};

const circlePath = (cy: number, r: number) =>
  `M${AXIS_X - r} ${cy}a${r} ${r} 0 1 0 ${2 * r} 0a${r} ${r} 0 1 0 ${-2 * r} 0Z`;

const Viewport = () => (
  <main className="relative min-w-0 flex-1 border border-[#cf7440] bg-linear-to-b from-[#99bfdc] via-[#c4d5e1] via-43% to-[#e5e5e5] to-75%">
    <svg viewBox="45 191 1232 576" className="absolute inset-0 h-full w-full" role="img" aria-label="Gear pump model">
      <Defs />
      <linearGradient id="ring" x1="0" y1="0" x2="0" y2="1">
        <stop offset="0" stopColor="#4cf25a" />
        <stop offset="1" stopColor="#5efc5e" />
      </linearGradient>
      <g stroke="#23402c" strokeWidth="1.700" strokeLinejoin="round" fillRule="evenodd">
        <path d={circlePath(479, 281) + mirror(ringProfile)} fill="url(#ring)" />
        <path d={mirror(rotorProfile) + circlePath(440, 112)} fill="#ff0000" stroke="#4a1c1c" />
        <path d={circlePath(440, 112)} fill="none" stroke="#2c3438" />
      </g>
      <path d="M661 425v54" stroke="#00f020" strokeWidth="2" />
      <path d="M661 479h54" stroke="#f00010" strokeWidth="2" />
      <g className="font-['Liberation_Mono',monospace] text-[15px]" fill="#dd7744">
        <text x="662" y="403">YC</text>
        <text x="662" y="479">ZC</text>
        <text x="738" y="479">XC</text>
      </g>
      <path d="M127 641v44" stroke="#00f020" strokeWidth="2" />
      <path d="M127 685h43" stroke="#e80010" strokeWidth="2" />
      <circle cx="127" cy="685" r="4.500" fill="#8c8ca8" />
      <g className="font-['Liberation_Mono',monospace] text-xs">
        <text x="123" y="636" fill="#30c040">Y</text>
        <text x="180" y="689" fill="#e02030">X</text>
        <text x="123" y="689" fill="#1018b0">Z</text>
      </g>
    </svg>
    <p className="absolute bottom-0 left-[3px] font-['Roboto',sans-serif] text-sm font-bold leading-4 text-[#e0681c]">
      #ACTIVE1 WORK Camera #ACTIVE1
    </p>
  </main>
);

const resourceTabs: string[][] = [
  ["assemblyNav", "partNav"],
  ["webPage"],
  ["clock", "roles", "spectrum", "process", "people", "scene"],
];

const ResourceBar = () => (
  <aside className="flex w-[33px] shrink-0 flex-col gap-[14px] border-r border-[#666] bg-[#a9a9a9] pl-[6px] pt-[15px]">
    {resourceTabs.map((tabs) => (
      <div key={tabs[0]} className="flex flex-col gap-[2px]">
        {tabs.map((name) => (
          <button
            key={name}
            aria-label={name}
            className="flex h-10 items-center justify-center border border-r-0 border-[#666] bg-[#dadada] shadow-[inset_1px_1px_0_#f4f4f4]"
          >
            <Icon name={name} />
          </button>
        ))}
      </div>
    ))}
  </aside>
);

/* ---------- taskbar ---------- */

const tasks: { icon: string; label: string; cut?: boolean }[] = [
  { icon: "greenBird", label: "超", cut: true },
  { icon: "ie", label: "参", cut: true },
  { icon: "folder", label: "常", cut: true },
  { icon: "ie", label: "朋", cut: true },
  { icon: "drive", label: "台", cut: true },
  { icon: "folder", label: "619" },
  { icon: "dataWindow", label: "内", cut: true },
  { icon: "lens", label: "E:", cut: true },
  { icon: "word", label: "圆", cut: true },
  { icon: "note", label: "UG3", cut: true },
  { icon: "logo", label: "NX ", cut: true },
];

const Taskbar = () => (
  <footer className="flex h-[30px] items-stretch bg-linear-to-b from-[#3f8cf3] via-[#245edb] via-15% to-[#1f4fc4] text-white">
    <button className="flex w-[97px] shrink-0 items-center gap-[6px] rounded-r-lg bg-linear-to-b from-[#5cac5c] via-[#388c38] via-25% to-[#2f7d2f] pl-[10px] font-['Noto_Sans_CJK_SC',sans-serif] text-lg italic leading-5">
      <Icon name="flag" className="h-5 w-5" />
      开始
    </button>
    <div className="flex w-[84px] shrink-0 items-center gap-2 pl-[11px]">
      {["tools", "anchor", "desktop"].map((name) => (
        <button key={name} aria-label={name}>
          <Icon name={name} className="h-4 w-4" />
        </button>
      ))}
    </div>
    <div className="flex flex-1 items-center">
      {tasks.map(({ icon, label, cut }, i) => (
        <button
          key={i}
          className={`mr-[2px] flex h-[25px] w-[77px] items-center gap-1 rounded-[3px] border pl-2 ${
            icon === "logo"
              ? "border-[#173a94] bg-[#1e4cb4]"
              : "border-[#5a96f8] border-b-[#2358c8] border-r-[#2358c8] bg-[#3c81f3]"
          }`}
        >
          <Icon name={icon} className="h-4 w-4" />
          <span className="whitespace-pre font-['Liberation_Serif','Noto_Sans_CJK_SC',serif] text-xs leading-4">
            {label}
            {cut && <span className="font-['Liberation_Mono',monospace] text-[10px]">...</span>}
          </span>
        </button>
      ))}
    </div>
    <div className="flex w-[167px] shrink-0 items-center border-l border-[#0c3c9c] bg-linear-to-b from-[#4cc0f8] via-[#1290e8] via-15% to-[#0f78d8]">
      <button aria-label="Show hidden icons" className="-ml-2 mr-[2px] flex h-4 w-4 items-center justify-center rounded-full border border-[#9cd4fc] bg-[#2c80e0]">
        <svg viewBox="0 0 8 8" className="h-2 w-2">
          <path d="M6 0L2 4l4 4" fill="none" stroke="#fff" strokeWidth="1.800" />
        </svg>
      </button>
      <div className="flex items-center gap-[2px]">
        <Icon name="penguin" className="h-4 w-4" />
        <Icon name="network" className="h-4 w-4" />
        <span className="flex w-4 flex-col items-center bg-white font-bold">
          <span className="w-full bg-[#e01c1c] text-center font-['Noto_Sans_CJK_SC',sans-serif] text-[7px] leading-[10px]">
            中文
          </span>
          <span className="font-['Liberation_Sans',sans-serif] text-[9px] leading-[10px] text-[#1018a0]">cn</span>
        </span>
        <Icon name="network" className="h-4 w-4" />
        <Icon name="networkOff" className="h-4 w-5" />
        <Icon name="shield" className="h-4 w-4" />
      </div>
      <time className="ml-[7px] font-['Liberation_Serif',serif] text-[13px] leading-4">21:10</time>
    </div>
  </footer>
);

export default function App() {
  return (
    <div className="flex h-screen min-h-[640px] flex-col overflow-hidden bg-[#e9e9e9] font-['Noto_Sans','Noto_Sans_CJK_SC',sans-serif]">
      <TitleBar />
      <MenuBar />

      <div className="flex h-[35px] border-t border-[#b4b4b4] bg-linear-to-b from-[#e0e0e0] to-[#cecece]">
        <Group>
          <button className="flex w-[67px] shrink-0 items-center whitespace-nowrap pl-[3px] text-xs">
            <Icon name="logo" />
            <span className="ml-1">开始</span>
            <svg viewBox="0 0 5 3" className="ml-1 h-[3px] w-[5px]">
              <path d="M0 0h5L2.500 3z" fill="#000" />
            </svg>
          </button>
          <Tools items="newFile open *save | cut copy paste | undo redo | info" />
          <Overflow />
        </Group>
        <Group>
          <Tools items="fit fitGrey zoomWindow zoomInOut rotate pan perspective | showHide invertShown | shaded v layout v" />
          <Overflow />
        </Group>
        <Group>
          <Tools items="*orient wcs palette playDiamond toPale fromPale" />
          <Overflow />
        </Group>
        <Group>
          <Tools items="distance angle" />
          <Overflow />
        </Group>
      </div>

      <div className="flex h-[34px] border-t border-[#f0f0f0] bg-linear-to-b from-[#dadada] to-[#c8c8c8]">
        <Group>
          <Tools items="sketch | extrude revolve sweep tube | sheetPencil | hole" />
          <Overflow chevron />
        </Group>
        <Group>
          <Tools items="unite v plane v | pyramid facet | edgeBlend faceBlend faceBlend chamfer shell thread trimBody pocket emboss | patch divideFace | pattern" />
          <Overflow />
        </Group>
        <Group className="flex-1">
          <Tools items="line arc circleLine | offset spline v" />
          <div className="ml-auto">
            <Overflow chevron />
          </div>
        </Group>
        <Group>
          <Tools items="ruled mesh swept section nSided | studio" />
          <span className="w-[5px]" />
          <Overflow chevron />
        </Group>
      </div>

      <SelectionBar />

      <div className="flex h-[22px] border-y border-t-[#f2f2f2] border-b-[#8e8e8e] bg-[#d9d9d9]">
        <div className="w-[611px] border-r border-white" />
        <div className="flex-1 border-r border-white" />
        <div className="w-5 border-r border-white" />
        <div className="mr-[2px] w-9 border-r border-white" />
      </div>

      <div className="relative h-4 bg-[#c4c2c2] pl-[5px] pt-1">
        <div className="h-full border-t-2 border-[#a2a2a2] border-b-2 border-b-[#777] bg-[#e2e2e2]" />
        <div className="absolute right-0 top-0 z-10 flex h-[22px] w-[118px] border border-[#555] bg-[#eee]">
          <button aria-label="Scroll left" className="flex w-5 items-center justify-center">
            <svg viewBox="0 0 10 10" className="h-[10px] w-[10px]">
              <path d="M8 1L2 5l6 4" fill="none" stroke="#555" strokeWidth="2" />
            </svg>
          </button>
          <div className="flex-1 border-x border-[#333] bg-linear-to-b from-[#5c6880] via-[#20242e] to-black" />
          <button aria-label="Scroll right" className="flex w-5 items-center justify-center">
            <svg viewBox="0 0 10 10" className="h-[10px] w-[10px]">
              <path d="M2 1l6 4-6 4" fill="none" stroke="#555" strokeWidth="2" />
            </svg>
          </button>
        </div>
      </div>

      <div className="flex min-h-0 flex-1 pr-[2px]">
        <ResourceBar />
        <div className="w-[11px] shrink-0 bg-[#ececec]" />
        <div className="flex min-w-0 flex-1 pb-[2px]">
          <Viewport />
        </div>
      </div>

      <Taskbar />
    </div>
  );
}
